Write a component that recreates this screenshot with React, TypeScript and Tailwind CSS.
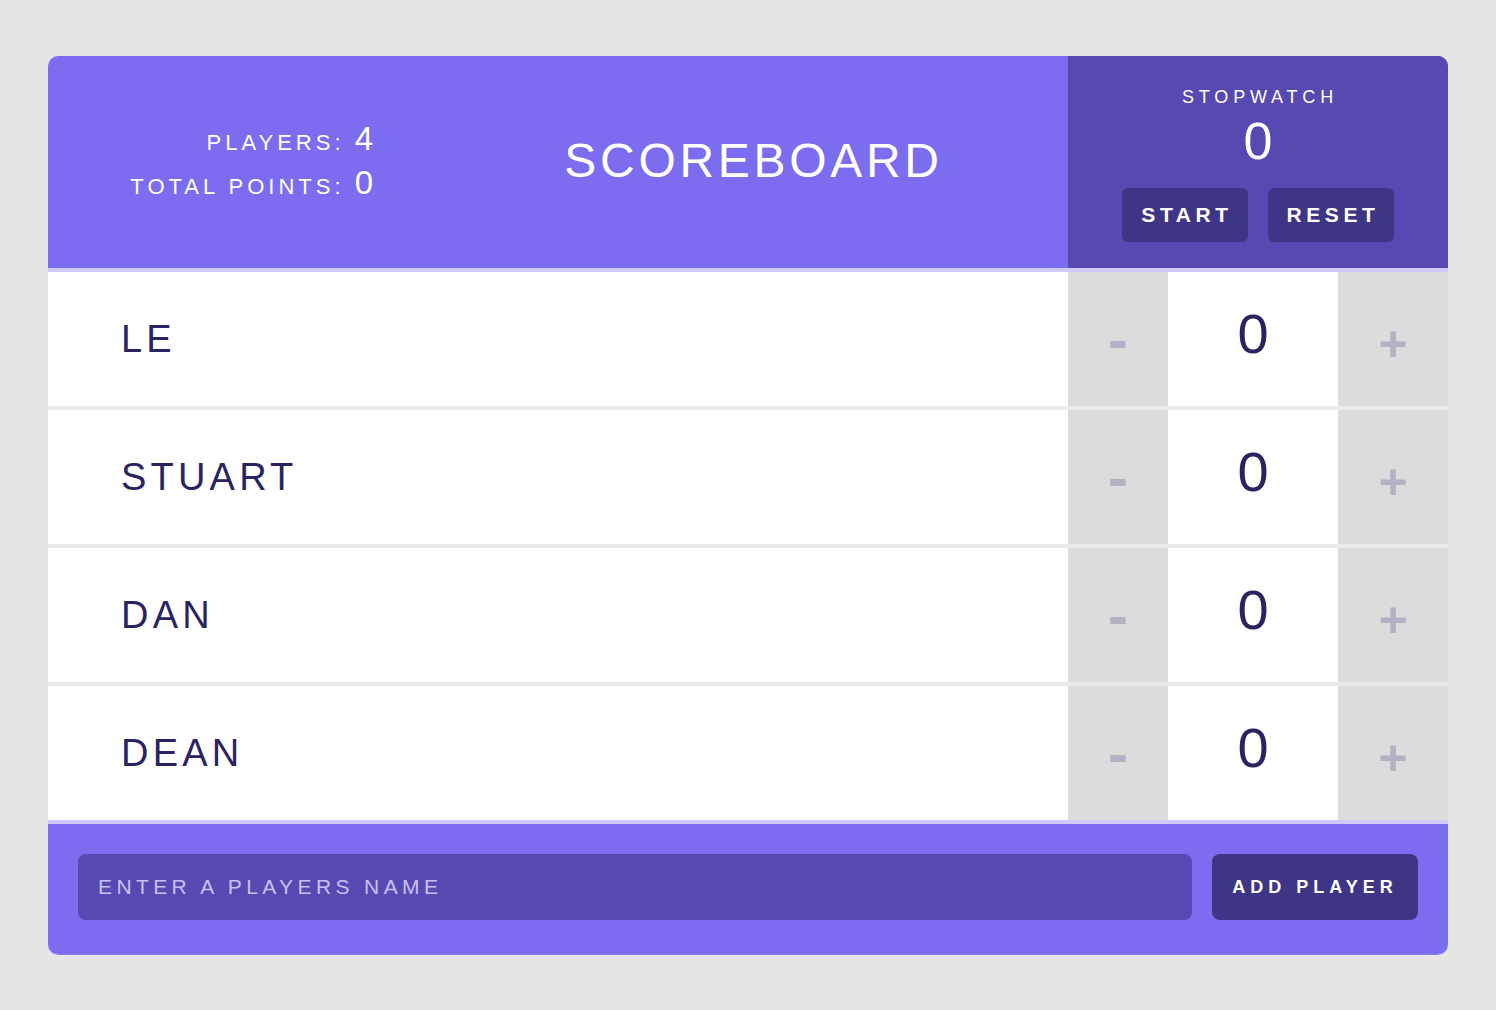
import { useState } from 'react';

interface Player {
  id: number;
  name: string;
  score: number;
}

const initialPlayers: Player[] = [
  { id: 1, name: 'Le', score: 0 },
  { id: 2, name: 'Stuart', score: 0 },
  { id: 3, name: 'Dan', score: 0 },
  { id: 4, name: 'Dean', score: 0 },
];

/**
 * Scoreboard App
 */
export default function App() {
  const [players, setPlayers] = useState<Player[]>(initialPlayers);

  const changeScore = (id: number, delta: number) => {
    setPlayers((prev) =>
      prev.map((p) => (p.id === id ? { ...p, score: Math.max(0, p.score + delta) } : p))
    );
  };

  const totalPoints = players.reduce((sum, p) => sum + p.score, 0);

  return (
    <div className="min-h-screen bg-[#e6e6e6] px-12 pt-14 font-['Liberation_Sans',Arial,sans-serif]">
      <div className="overflow-hidden rounded-[10px] bg-white shadow-[0_1px_0_#8a7cf3]">
        {/* Header */}
        <Header playerCount={players.length} totalPoints={totalPoints} />

        {/* Player rows */}
        <div className="flex flex-col gap-1 bg-[#ebebeb]">
          {players.map((player) => (
            <PlayerRow
              key={player.id}
              player={player}
              onChange={(delta) => changeScore(player.id, delta)}
            />
          ))}
        </div>

        {/* Footer */}
        <AddPlayerForm />
      </div>
    </div>
  );
}

interface HeaderProps {
  playerCount: number;
  totalPoints: number;
}

function Header({ playerCount, totalPoints }: HeaderProps) {
  return (
    <div className="flex h-[216px] border-b-4 border-[#d1c9fa] bg-[#7b6cf0] text-white">
      <div className="flex flex-1 items-center">
        <div className="w-[325px] pb-[9px] text-right">
          <div className="flex h-[44px] items-baseline justify-end">
            <span className="text-[22px] tracking-[4px]">PLAYERS:&nbsp;</span>
            <span className="text-[33px]">{playerCount}</span>
          </div>
          <div className="flex h-[44px] items-baseline justify-end">
            <span className="text-[22px] tracking-[4px]">TOTAL POINTS:&nbsp;</span>
            <span className="text-[33px]">{totalPoints}</span>
          </div>
        </div>
        <h1 className="flex-1 pb-[2px] pl-[66px] text-center text-[48px] tracking-[3.7px]">
          SCOREBOARD
        </h1>
      </div>
      <Stopwatch />
    </div>
  );
}

function Stopwatch() {
  return (
    <div className="flex w-[380px] flex-col items-center bg-[#5649b2] pt-[31px]">
      <h2 className="h-[21px] pl-[4px] text-[18px] leading-[21px] tracking-[4.8px]">STOPWATCH</h2>
      <span className="mt-[3px] h-[60px] text-[52px] leading-[60px]">0</span>
      <div className="mt-[17px] flex gap-5">
        <StopwatchButton>START</StopwatchButton>
        <StopwatchButton>RESET</StopwatchButton>
      </div>
    </div>
  );
}

function StopwatchButton({ children }: { children: React.ReactNode }) {
  return (
    <button className="flex h-[54px] w-[126px] items-center justify-center rounded-md bg-[#3f3586] pl-[4px] text-[21px] font-bold tracking-[4.6px] text-white">
      {children}
    </button>
  );
}

interface PlayerRowProps {
  player: Player;
  onChange: (delta: number) => void;
}

function PlayerRow({ player, onChange }: PlayerRowProps) {
  return (
    <div className="flex h-[134px] bg-white">
      <div className="flex flex-1 items-center pl-[73px] text-[38px] tracking-[4.2px] text-[#2b2360]">
        {player.name.toUpperCase()}
      </div>
      <button
        onClick={() => onChange(-1)}
        className="flex w-[100px] items-center justify-center bg-[#dcdcdc] pt-[1px] text-[60px] font-bold text-[#b4b1c5]"
      >
        -
      </button>
      <div className="flex w-[170px] items-center justify-center pb-[10px] text-[56px] text-[#2b2360]">
        {player.score}
      </div>
      <button
        onClick={() => onChange(1)}
        className="flex w-[110px] items-center justify-center bg-[#dcdcdc] pt-[10px] text-[50px] font-bold text-[#b4b1c5]"
      >
        +
      </button>
    </div>
  );
}

function AddPlayerForm() {
  return (
    <form
      className="flex gap-5 border-t-4 border-[#d1c9fa] bg-[#7b6cf0] px-[30px] pb-[34px] pt-[30px]"
      onSubmit={(e) => e.preventDefault()}
    >
      <input
        type="text"
        placeholder="ENTER A PLAYERS NAME"
        className="h-[66px] flex-1 rounded-lg bg-[#5649b2] px-5 text-[21px] tracking-[4.4px] text-white outline-none placeholder:text-[#c9c0f7]"
      />
      <button
        type="submit"
        className="h-[66px] w-[206px] rounded-lg bg-[#3f3586] text-[18px] font-bold tracking-[5px] text-white"
      >
        ADD PLAYER
      </button>
    </form>
  );
}
